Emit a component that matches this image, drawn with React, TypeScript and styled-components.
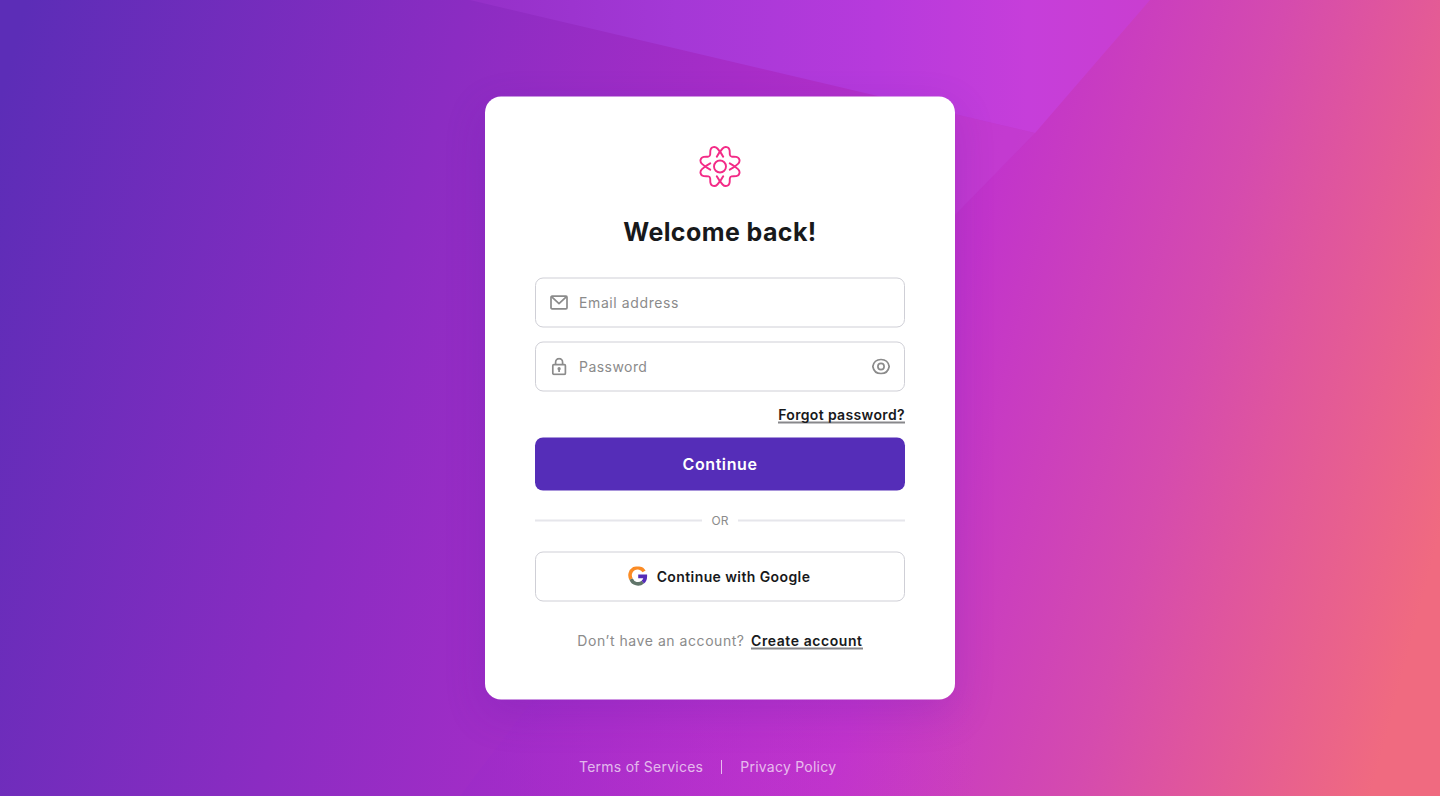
import React, { useState } from "react";
import styled, { createGlobalStyle } from "styled-components";

const GREY = "#8b8b8b";
const INK = "#18191b";
const LINE = "#cfcfd6";

export default function App() {
  const [visible, setVisible] = useState(false);

  return (
    <>
      <GlobalStyle />
      <Page>
        <Backdrop />
        <Card>
          <Logo />
          <Title>Welcome back!</Title>
          <Field>
            <MailIcon />
            <Input type="email" placeholder="Email address" $spacing="0.6px" />
          </Field>
          <Field>
            <LockIcon />
            <Input
              type={visible ? "text" : "password"}
              placeholder="Password"
              $spacing="0.45px"
            />
            <IconButton
              type="button"
              aria-label="Show password"
              onClick={() => setVisible(!visible)}
            >
              <EyeIcon />
            </IconButton>
          </Field>
          <ForgotRow>
            <Link href="#" $spacing="0.35px">
              Forgot password?
            </Link>
          </ForgotRow>
          <Submit type="submit">Continue</Submit>
          <Divider>
            <span>OR</span>
          </Divider>
          <GoogleButton type="button">
            <GoogleIcon />
            <span>Continue with Google</span>
          </GoogleButton>
          <SignUp>
            <span>Don’t have an account?</span>
            <Link href="#" $spacing="0.57px">
              Create account
            </Link>
          </SignUp>
        </Card>
        <Footer>
          <FooterLink href="#">Terms of Services</FooterLink>
          <FooterLink href="#">Privacy Policy</FooterLink>
        </Footer>
      </Page>
    </>
  );
}

const Backdrop = () => (
  <BackdropSvg viewBox="0 0 1440 796" preserveAspectRatio="none">
    <defs>
      <linearGradient
        id="base"
        gradientUnits="userSpaceOnUse"
        x1="0"
        y1="100"
        x2="1530"
        y2="504"
      >
        <stop offset="0" stopColor="#5c2db7" />
        <stop offset="0.27" stopColor="#8b2cc2" />
        <stop offset="0.45" stopColor="#a82dc8" />
        <stop offset="0.62" stopColor="#c234cb" />
        <stop offset="0.77" stopColor="#d54bae" />
        <stop offset="0.83" stopColor="#df559e" />
        <stop offset="0.95" stopColor="#f06a80" />
      </linearGradient>
      <linearGradient id="shard" x1="0" y1="0" x2="1" y2="0">
        <stop offset="0" stopColor="#9430c8" />
        <stop offset="0.3" stopColor="#a438d6" />
        <stop offset="0.6" stopColor="#b73adc" />
        <stop offset="0.82" stopColor="#c63eda" />
        <stop offset="1" stopColor="#c93ed0" />
      </linearGradient>
      <linearGradient id="glow" x1="0" y1="0" x2="1" y2="0">
        <stop offset="0" stopColor="#9a2ac8" stopOpacity="0.5" />
        <stop offset="0.5" stopColor="#b830d2" stopOpacity="0.3" />
        <stop offset="1" stopColor="#c235d0" stopOpacity="0" />
      </linearGradient>
    </defs>
    <rect width="1440" height="796" fill="url(#base)" />
    <polygon points="470,0 1150,0 1035,133" fill="url(#shard)" />
    <polygon points="1035,133 950,113 950,220" fill="#c43fd6" opacity="0.5" />
    <polygon points="460,796 540,690 980,690 980,796" fill="url(#glow)" />
  </BackdropSvg>
);

const Logo = () => (
  <LogoSvg viewBox="0 0 42 42">
    <circle cx="21" cy="21" r="6" />
    {[0, 90, 180, 270].map((deg) => (
      <path
        key={deg}
        transform={`rotate(${deg} 21 21)`}
        d="M17.8 11.2C19.4 8.2 20.8 6 23.6 3C26 .4 30 1.2 30.6 4.8C30.9 6.6 30.6 8 30.9 9.4Q31.2 10.8 32.6 11.1C34 11.4 35.4 11.1 37.2 11.4C40.8 12 41.6 16 39 18.4C36 21.2 33.8 22.6 30.8 24.2"
      />
    ))}
  </LogoSvg>
);

const MailIcon = () => (
  <Icon width="18" height="18" viewBox="0 0 18 18">
    <rect x="1" y="2.7" width="16" height="12.6" rx="1" />
    <path d="M1.5 3.2L9 10.2L16.5 3.2" />
  </Icon>
);

const LockIcon = () => (
  <Icon width="18" height="18" viewBox="0 0 18 18">
    <rect x="2.8" y="7.2" width="12.6" height="9.6" rx="1" />
    <path d="M5.6 7V4.7a3.5 3.5 0 0 1 7 0V7M9.1 11.8V14.6" />
    <circle cx="9.1" cy="11.2" r="0.8" />
  </Icon>
);

const EyeIcon = () => (
  <Icon width="20" height="18" viewBox="0 0 20 18">
    <path d="M1.8 9C2.6 4.5 6 2 10 2S17.4 4.5 18.2 9C17.4 13.5 14 16 10 16S2.6 13.5 1.8 9Z" />
    <circle cx="10" cy="9" r="3.1" />
  </Icon>
);

const GoogleIcon = () => (
  <svg width="20" height="20" viewBox="0 0 20 20" fill="none" strokeWidth="3.6">
    <path d="M16.1 4.9A7.4 7.4 0 0 0 3.1 12.6" stroke="#fb8b24" />
    <path d="M3.1 12.6A7.4 7.4 0 0 0 14.8 15.6" stroke="#60756a" />
    <path d="M14.8 15.6Q17.3 13.5 17.3 9.9H10.2" stroke="#552db8" />
  </svg>
);

const GlobalStyle = createGlobalStyle`
  body {
    margin: 0;
    font-family: Inter, "Liberation Sans", sans-serif;
    -webkit-font-smoothing: antialiased;
  }

  *, *::before, *::after {
    box-sizing: border-box;
  }
`;

const Page = styled.main`
  position: relative;
  display: grid;
  grid-template-rows: 97px 603px 1fr;
  justify-items: center;
  height: 100vh;
  min-height: 796px;
  overflow: hidden;
`;

const BackdropSvg = styled.svg`
  position: absolute;
  inset: 0;
  z-index: -1;
  width: 100%;
  height: 100%;
`;

const Card = styled.form`
  grid-row: 2;
  display: flex;
  flex-direction: column;
  width: 470px;
  padding: 49px 50px 0;
  border-radius: 16px;
  background: #fff;
  box-shadow: 0 14px 40px rgba(85, 30, 170, 0.2);
  transform: translateY(-0.5px);
`;

const LogoSvg = styled.svg`
  align-self: center;
  width: 42px;
  height: 42px;
  fill: none;
  stroke: #f32b87;
  stroke-width: 1.9;
  stroke-linecap: round;
  stroke-linejoin: round;
`;

const Title = styled.h1`
  margin: 26px 0 28px;
  color: ${INK};
  font-size: 25px;
  font-weight: 700;
  line-height: 36px;
  letter-spacing: 0.4px;
  text-align: center;
  white-space: nowrap;
`;

const Field = styled.label`
  display: flex;
  align-items: center;
  gap: 11px;
  height: 50px;
  margin-bottom: 14px;
  padding: 0 13px 0 14px;
  border: 1px solid ${LINE};
  border-radius: 8px;
`;

const Input = styled.input<{ $spacing: string }>`
  flex: 1;
  min-width: 0;
  padding: 0;
  border: 0;
  outline: 0;
  background: none;
  color: ${INK};
  font: 400 14px/20px Inter, sans-serif;
  letter-spacing: ${({ $spacing }) => $spacing};

  &::placeholder {
    color: ${GREY};
    opacity: 1;
  }
`;

const Icon = styled.svg`
  flex: none;
  fill: none;
  stroke: ${GREY};
  stroke-width: 1.7;
  stroke-linejoin: round;
`;

const IconButton = styled.button`
  display: flex;
  padding: 0;
  border: 0;
  background: none;
  cursor: pointer;
`;

const Link = styled.a<{ $spacing: string }>`
  height: 19px;
  border-bottom: 2px solid #88888b;
  color: ${INK};
  font-size: 14px;
  font-weight: 600;
  line-height: 19px;
  letter-spacing: ${({ $spacing }) => $spacing};
  text-decoration: none;
  white-space: nowrap;
`;

const ForgotRow = styled.div`
  display: flex;
  justify-content: flex-end;
  height: 33px;
  margin-top: -1px;
`;

const Submit = styled.button`
  height: 53px;
  flex: none;
  padding: 0 0 2px;
  border: 0;
  border-radius: 8px;
  background: #552db8;
  color: #fff;
  font: 600 16px/24px Inter, sans-serif;
  letter-spacing: 0.58px;
`;

const Divider = styled.div`
  display: flex;
  align-items: center;
  gap: 10px;
  height: 20px;
  margin: 20px 0 21px;
  color: ${GREY};
  font-size: 12px;

  span {
    padding-bottom: 2px;
  }

  &::before,
  &::after {
    content: "";
    flex: 1;
    height: 2px;
    background: #e6e6eb;
  }
`;

const GoogleButton = styled.button`
  display: flex;
  flex: none;
  align-items: center;
  justify-content: center;
  gap: 9px;
  height: 50px;
  padding: 0 2px 0 0;
  border: 1px solid ${LINE};
  border-radius: 8px;
  background: #fff;
  color: ${INK};
  font: 600 14px/20px Inter, sans-serif;
  letter-spacing: 0.4px;
  white-space: nowrap;
`;

const SignUp = styled.div`
  display: flex;
  justify-content: center;
  gap: 6.5px;
  margin-top: 29px;
  color: ${GREY};
  font-size: 14px;
  line-height: 20px;
  letter-spacing: 0.55px;
  white-space: nowrap;
`;

const Footer = styled.footer`
  grid-row: 3;
  display: flex;
  align-items: center;
  width: 282px;
  height: 20px;
  margin-top: 57px;
`;

const FooterLink = styled.a`
  color: rgba(255, 255, 255, 0.68);
  font-size: 14px;
  line-height: 20px;
  letter-spacing: 0.24px;
  text-decoration: none;
  white-space: nowrap;

  & + & {
    display: flex;
    align-items: center;
  }

  & + &::before {
    content: "";
    width: 1px;
    height: 14px;
    margin: 0 18px;
    background: rgba(255, 255, 255, 0.68);
  }
`;
